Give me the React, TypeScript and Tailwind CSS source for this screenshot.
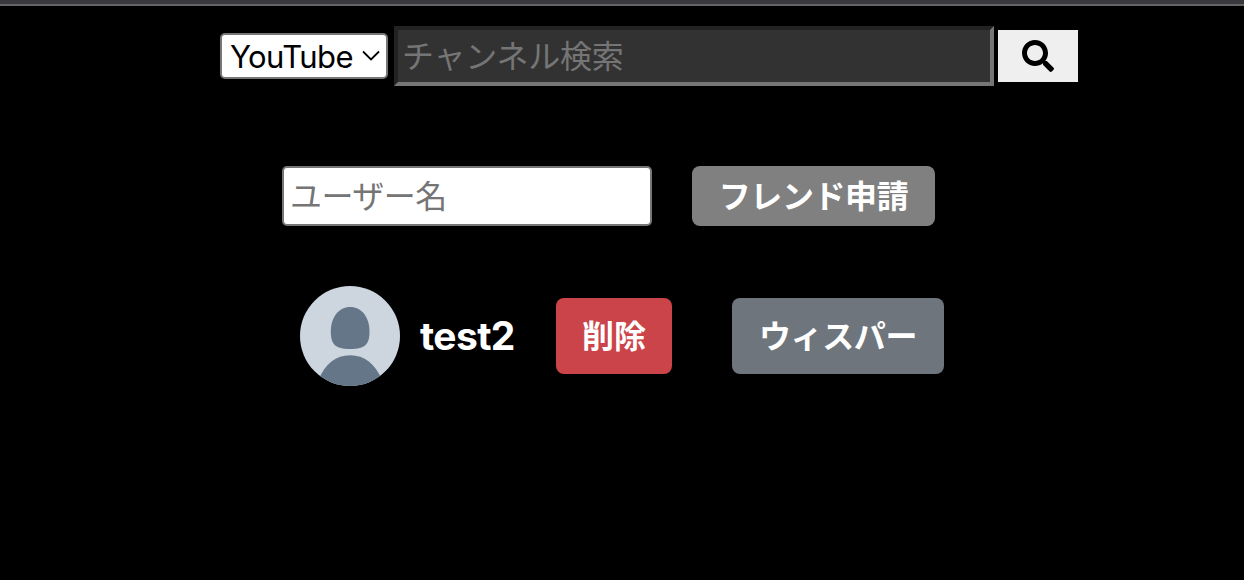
import { FaSearch } from "react-icons/fa";

function Avatar() {
  return (
    <svg viewBox="0 0 100 100" className="size-[100px] shrink-0 rounded-full bg-[#cdd6df]">
      <g className="blur-[0.7px]" fill="#647687">
        <path d="M50.2 21C61.5 21 69.5 31 69.5 45.5C69.5 58 65.5 63 50.2 63C34.8 63 30.8 58 30.8 45.5C30.8 31 39 21 50.2 21Z" />
        <path d="M18.5 94C25 78 36 69.3 50.2 69.3C64.5 69.3 75 78 82 94V104H18.5Z" />
      </g>
    </svg>
  );
}

function SearchBar() {
  return (
    <div className="ml-[220px] flex h-[60px] items-center">
      <div className="grid h-[46px] w-[168px] items-center">
        <select className="col-start-1 row-start-1 h-[46px] w-full appearance-none rounded-[5px] border-2 border-[#767676] bg-white pt-0.5 pl-2 text-[31px] leading-[40px] tracking-[-0.6px] text-black outline-none">
          <option>YouTube</option>
        </select>
        <svg
          viewBox="0 0 18 12"
          className="pointer-events-none col-start-1 row-start-1 mr-2 h-3 w-[18px] justify-self-end"
          fill="none"
          stroke="#000"
          strokeWidth="1.8"
        >
          <path d="M1 1.5L9 9.5L17 1.5" />
        </svg>
      </div>
      <input
        placeholder="チャンネル検索"
        className="ml-1.5 h-[60px] w-[600px] border-4 border-t-[#222] border-r-[#767676] border-b-[#767676] border-l-[#222] bg-[#323232] px-1 text-[32px] tracking-[-0.2px] outline-none placeholder:text-[#757575]"
      />
      <button className="ml-1 flex h-[52px] w-20 items-center justify-center bg-[#efefef] text-black">
        <FaSearch size={32} />
      </button>
    </div>
  );
}

export default function App() {
  return (
    <div className="h-[580px] w-[1244px] overflow-hidden bg-black font-['Inter','Noto_Sans_CJK_JP',sans-serif] text-white">
      <div className="mb-5 h-1.5 border-b-2 border-[#626468] bg-[#38383d]" />
      <SearchBar />
      <div className="mt-20 ml-[282px] flex gap-10">
        <input
          placeholder="ユーザー名"
          className="h-[60px] w-[370px] rounded-[5px] border-2 border-[#767676] bg-white px-1.5 text-[32px] tracking-[-0.5px] text-black outline-none placeholder:text-[#757575]"
        />
        <button className="h-[60px] w-[243px] rounded-lg bg-[#808080] pt-0.5 text-[32px] font-bold tracking-[-0.4px]">
          フレンド申請
        </button>
      </div>
      <div className="mt-[60px] ml-[300px] flex items-center">
        <Avatar />
        <span className="ml-5 w-[136px] text-[39px] font-bold tracking-[-0.6px]">test2</span>
        <button className="h-[76px] w-[116px] rounded-lg bg-[#cb444a] pt-0.5 text-[32px] font-bold">削除</button>
        <button className="ml-[60px] h-[76px] w-[212px] rounded-lg bg-[#6e757c] pt-0.5 text-[32px] font-bold tracking-[-0.4px]">
          ウィスパー
        </button>
      </div>
    </div>
  );
}
